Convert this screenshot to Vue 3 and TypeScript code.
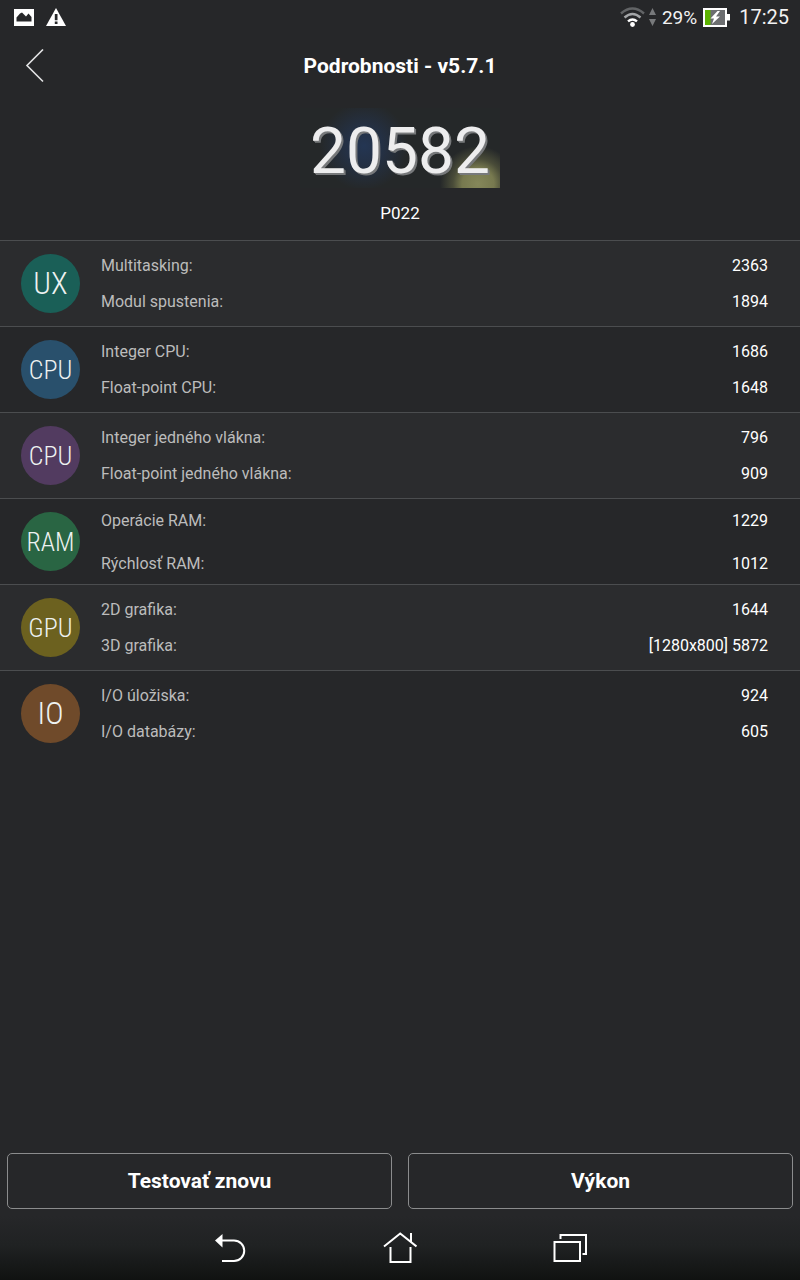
<script setup lang="ts">
interface Metric {
  label: string
  value: string
}

interface Group {
  id: string
  badge: string
  tone: string
  size: string
  spread?: boolean
  metrics: Metric[]
}

const groups: Group[] = [
  {
    id: 'ux', badge: 'UX', tone: 'teal', size: 'wide',
    metrics: [
      { label: 'Multitasking:', value: '2363' },
      { label: 'Modul spustenia:', value: '1894' },
    ],
  },
  {
    id: 'cpu', badge: 'CPU', tone: 'blue', size: 'narrow',
    metrics: [
      { label: 'Integer CPU:', value: '1686' },
      { label: 'Float-point CPU:', value: '1648' },
    ],
  },
  {
    id: 'thread', badge: 'CPU', tone: 'purple', size: 'narrow',
    metrics: [
      { label: 'Integer jedného vlákna:', value: '796' },
      { label: 'Float-point jedného vlákna:', value: '909' },
    ],
  },
  {
    id: 'ram', badge: 'RAM', tone: 'green', size: 'narrow', spread: true,
    metrics: [
      { label: 'Operácie RAM:', value: '1229' },
      { label: 'Rýchlosť RAM:', value: '1012' },
    ],
  },
  {
    id: 'gpu', badge: 'GPU', tone: 'olive', size: 'narrow',
    metrics: [
      { label: '2D grafika:', value: '1644' },
      { label: '3D grafika:', value: '[1280x800] 5872' },
    ],
  },
  {
    id: 'io', badge: 'IO', tone: 'brown', size: 'wide',
    metrics: [
      { label: 'I/O úložiska:', value: '924' },
      { label: 'I/O databázy:', value: '605' },
    ],
  },
]
</script>

<template>
  <div class="screen">
    <div class="status">
      <div class="status-side">
        <svg width="20" height="18" viewBox="0 0 20 18" aria-hidden="true">
          <path fill="#fff" fill-rule="evenodd" d="M0 1h20v17H0zM2.500 13.500h15V9L14.500 5.500l-2.500 3-4-4-2 1L2.500 9.500z" />
        </svg>
        <svg class="alert" width="20" height="18" viewBox="0 0 20 18" aria-hidden="true">
          <path fill="#fff" d="M10 0 20 18H0z" />
          <path fill="#262729" d="M8.800 6h2.700v6.300H8.800zM8.800 13.500h2.700v2.500H8.800z" />
        </svg>
      </div>
      <div class="status-side">
        <svg width="36" height="22" viewBox="0 0 36 22" fill="none" aria-hidden="true">
          <path stroke="#626466" stroke-width="2.400" d="M1 7.500Q12.500-2.500 24 7.500" />
          <path stroke="#a4a6a8" stroke-width="2.400" d="M4.500 11.500Q12.500 4.500 20.500 11.500" />
          <path stroke="#fff" stroke-width="2.400" d="M8 15.300Q12.500 11.500 17 15.300" />
          <circle cx="12.500" cy="18.500" r="2.400" fill="#fff" />
          <path fill="#77797b" d="M32.500 2 36 9h-7zM32.500 20 36 13h-7z" />
        </svg>
        <span class="percent">29%</span>
        <svg width="27" height="19" viewBox="0 0 27 19" aria-hidden="true">
          <path fill="#fff" d="M0 0h24v6h3v6.500h-3V19H0z" />
          <path fill="#6c6e70" d="M2 2h20v15H2z" />
          <path fill="#5cb200" d="M2 2h5.500v15H2z" />
          <path fill="#fff" d="M14.500 3 7.500 10.500h3.500l-2 5.500 8-7.500h-4L17 3z" />
        </svg>
        <span class="clock">17:25</span>
      </div>
    </div>

    <header class="titlebar">
      <button class="back" type="button" aria-label="Späť">
        <svg width="20" height="34" viewBox="0 0 20 34" aria-hidden="true">
          <path d="M18 .500 2 16.500l16 16" fill="none" stroke="#e4e5e6" stroke-width="1.600" />
        </svg>
      </button>
      <h1>Podrobnosti - v5.7.1</h1>
    </header>

    <section class="summary">
      <div class="score">20582</div>
      <div class="device">P022</div>
    </section>

    <main>
      <table>
        <tbody v-for="group in groups" :key="group.id" :class="{ spread: group.spread }">
          <tr v-for="(metric, index) in group.metrics" :key="metric.label">
            <td v-if="index === 0" class="badge-cell" rowspan="2">
              <span class="badge" :class="[group.tone, group.size]">{{ group.badge }}</span>
            </td>
            <th scope="row">{{ metric.label }}</th>
            <td class="value">{{ metric.value }}</td>
          </tr>
        </tbody>
      </table>
    </main>

    <div class="actions">
      <button type="button">Testovať znovu</button>
      <button type="button">Výkon</button>
    </div>

    <nav class="navbar">
      <button type="button" aria-label="Naspäť">
        <svg width="34" height="34" viewBox="0 0 34 34" fill="none" aria-hidden="true">
          <path d="M8 9.500h13a10.200 10.200 0 0 1 0 20.500H9" stroke="#fff" stroke-width="2" />
          <path d="M2 9.500 9.500 3v13.500z" fill="#fff" />
        </svg>
      </button>
      <button type="button" aria-label="Domov">
        <svg width="34" height="34" viewBox="0 0 34 34" fill="none" stroke="#fff" stroke-width="2" aria-hidden="true">
          <path d="M1 15.500 17.200 2.500 33.500 15.500M28 2v9M7.500 16v15h20V16" />
        </svg>
      </button>
      <button type="button" aria-label="Posledné aplikácie">
        <svg width="34" height="34" viewBox="0 0 34 34" fill="none" stroke="#fff" stroke-width="2" aria-hidden="true">
          <path d="M1.500 11h25.500v19H1.500zM7.500 8V4h25.500v19H29.500" />
        </svg>
      </button>
    </nav>
  </div>
</template>

<style>
body {
  margin: 0;
  background: #262729;
}
</style>

<style scoped>
.screen {
  display: flex;
  flex-direction: column;
  min-height: 100vh;
  background: #262729;
  color: #fff;
  font-family: Roboto, "Noto Sans", sans-serif;
  font-size: 16px;
}

.status,
.status-side {
  display: flex;
  align-items: center;
}

.status {
  justify-content: space-between;
  height: 34px;
  padding: 0 11px 0 14px;
}

.status-side {
  color: #f2f2f2;
  font-size: 20px;
}

.alert {
  margin-left: 12px;
}

.percent {
  margin: 0 6px 0 6px;
  font-size: 19px;
}

.clock {
  margin-left: 9px;
}

button {
  border: 0;
  padding: 0;
  background: none;
  color: inherit;
  font: inherit;
  cursor: pointer;
}

svg {
  display: block;
}

.titlebar {
  display: grid;
  grid-template-columns: 70px 1fr 70px;
  align-items: center;
  height: 63px;
}

.back {
  display: grid;
  place-items: center;
  height: 63px;
}

h1 {
  margin: 0;
  font-size: 21px;
  font-weight: 700;
  line-height: 24px;
  text-align: center;
}

.summary {
  display: flex;
  flex-direction: column;
  align-items: center;
  height: 143px;
}

.score {
  width: 200px;
  height: 80px;
  margin-top: 11px;
  background:
    radial-gradient(circle at 178px 76px, #85875a 0, #77794f 16px, #62644399 25px, #62644300 38px),
    radial-gradient(circle at 64px 38px, #243653 0, #24334ccc 18px, #24303f00 44px),
    #252829;
  color: #ededee;
  font-size: 64px;
  line-height: 88px;
  text-align: center;
  text-shadow: 1px 1px 0 #77797b, 2px 2px 0 #77797b;
}

.device {
  margin-top: 14px;
  font-size: 17px;
  line-height: 22px;
}

table {
  width: 100%;
  border-collapse: separate;
  border-spacing: 0;
}

tbody:nth-child(odd) {
  background: #2b2c2e;
}

tr:first-child > * {
  border-top: 1px solid #4b4d4f;
}

th,
td {
  box-sizing: border-box;
  height: 43px;
  padding: 0;
  line-height: 20px;
  vertical-align: middle;
}

th {
  color: #bcbcbc;
  font-weight: 400;
  text-align: left;
}

.value {
  padding-right: 32px;
  text-align: right;
}

tbody:not(.spread) tr:first-child > :not(.badge-cell) {
  padding-top: 7px;
}

tbody:not(.spread) tr:last-child > * {
  padding-bottom: 5px;
}

.spread tr > :not(.badge-cell) {
  padding-top: 2px;
}

.badge-cell {
  width: 101px;
  padding-left: 21px;
}

.badge {
  display: flex;
  align-items: center;
  justify-content: center;
  width: 59px;
  height: 59px;
  border-radius: 50%;
  color: #eef2f1;
  font-family: "Roboto Condensed", Roboto, sans-serif;
  font-weight: 300;
}

.wide {
  font-size: 31px;
}

.narrow {
  font-size: 26px;
}

.teal {
  background: #1a5f57;
}

.blue {
  background: #29506c;
}

.purple {
  background: #523b60;
}

.green {
  background: #296543;
}

.olive {
  background: #6c611f;
}

.brown {
  background: #6f4a2a;
}

.actions {
  display: grid;
  grid-template-columns: 1fr 1fr;
  gap: 16px;
  margin-top: auto;
  padding: 0 7px 7px;
}

.actions button {
  height: 56px;
  border: 1px solid #8b8c8d;
  border-radius: 5px;
  font-size: 21px;
  font-weight: 700;
}

.navbar {
  display: flex;
  justify-content: center;
  gap: 136px;
  height: 64px;
  background: linear-gradient(#262729, #202223 45%, #101211);
}

.navbar button {
  display: grid;
  place-items: center;
  width: 34px;
}
</style>
